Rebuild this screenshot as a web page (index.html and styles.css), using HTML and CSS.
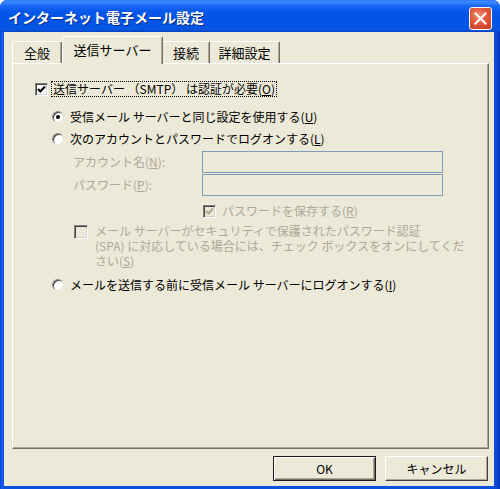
FILE: index.html
```html
<!DOCTYPE html>
<html lang="ja">
<head>
<meta charset="utf-8">
<link rel="stylesheet" href="styles.css">
</head>
<body>
<div class="window">
  <div class="titlebar">
    <span class="title">インターネット電子メール設定</span>
    <span class="close">
      <svg width="21" height="21" viewBox="0 0 21 21"><path d="M5.5 5.5 L15.5 15.5 M15.5 5.5 L5.5 15.5" stroke="#fff" stroke-width="2.2" stroke-linecap="square"/></svg>
    </span>
  </div>
  <div class="client">
    <div class="tabs">
      <div class="tab first">全般</div>
      <div class="tab active">送信サーバー</div>
      <div class="tab">接続</div>
      <div class="tab">詳細設定</div>
    </div>
    <div class="panel">
      <div class="row r1">
        <span class="check"><svg width="11" height="11" viewBox="0 0 11 11"><path d="M2 5 L4.3 7.5 L9 2.5" fill="none" stroke="#000" stroke-width="2.2"/></svg></span>
        <span class="label focus">送信サーバー （SMTP） は認証が必要(<u>O</u>)</span>
      </div>
      <div class="row r2 ind1">
        <span class="radio on"></span>
        <span class="label">受信メール サーバーと同じ設定を使用する(<u>U</u>)</span>
      </div>
      <div class="row r3 ind1">
        <span class="radio"></span>
        <span class="label">次のアカウントとパスワードでログオンする(<u>L</u>)</span>
      </div>
      <div class="field f1">
        <span class="flabel dis">アカウント名(<u>N</u>):</span>
        <span class="input"></span>
      </div>
      <div class="field f2">
        <span class="flabel dis">パスワード(<u>P</u>):</span>
        <span class="input"></span>
      </div>
      <div class="row r4 ind3">
        <span class="check disabled"><svg width="11" height="11" viewBox="0 0 11 11"><path d="M2 5 L4.3 7.5 L9 2.5" fill="none" stroke="#ACA899" stroke-width="2.2"/></svg></span>
        <span class="label dis">パスワードを保存する(<u>R</u>)</span>
      </div>
      <div class="spa ind2">
        <span class="check disabled big"></span>
        <span class="spatext dis">メール サーバーがセキュリティで保護されたパスワード認証<br>(SPA) に対応している場合には、チェック ボックスをオンにしてくだ<br>さい(<u>S</u>)</span>
      </div>
      <div class="row r5 ind1">
        <span class="radio"></span>
        <span class="label">メールを送信する前に受信メール サーバーにログオンする(<u>I</u>)</span>
      </div>
    </div>
    <div class="buttons">
      <span class="btn default">OK</span>
      <span class="btn">キャンセル</span>
    </div>
  </div>
</div>
</body>
</html>
```

FILE: styles.css
```css
html, body {
  margin: 0;
  padding: 0;
  background: #ffffff;
}
body {
  width: 500px;
  height: 489px;
  overflow: hidden;
  font-family: "Noto Sans CJK JP", "Noto Sans", sans-serif;
  font-size: 12px;
  color: #000;
}
.window {
  width: 500px;
  height: 489px;
  display: flex;
  flex-direction: column;
  background: linear-gradient(to right, #0840d8 0, #1660f0 2px, #0a4fe0 4px, #0a4fe0 494px, #0b47d6 497px, #0535b8 500px);
  border-radius: 7px 7px 0 0;
  box-sizing: border-box;
}
.titlebar {
  height: 32px;
  flex: none;
  display: flex;
  align-items: center;
  justify-content: space-between;
  padding: 0 8px 0 8px;
  border-radius: 7px 7px 0 0;
  background: linear-gradient(to bottom, #2a78f8 0px, #3d8bff 2px, #1866f4 6px, #0658ea 12px, #0054e3 20px, #0357e6 27px, #0a55dc 30px, #0040c0 32px);
}
.title {
  color: #fff;
  font-weight: bold;
  font-size: 14px;
  line-height: 16px;
  text-shadow: 1px 1px 0 #0a2a8a;
  margin-top: 1px;
}
.close {
  width: 21px;
  height: 21px;
  margin-right: 0;
  margin-top: 5px;
  border: 1px solid #fff;
  border-radius: 3px;
  background: radial-gradient(circle at 40% 35%, #f08a6a 0%, #e0583a 45%, #c4381a 100%);
  display: flex;
  align-items: center;
  justify-content: center;
}
.client {
  flex: 1;
  margin: 0 6px 3px 4px;
  background: #ece9d8;
  display: flex;
  flex-direction: column;
}
.tabs {
  display: flex;
  align-items: flex-end;
  height: 31px;
  padding-left: 8px;
  flex: none;
}
.tab {
  height: 22px;
  line-height: 22px;
  box-sizing: border-box;
  border-top: 1px solid #fff;
  border-left: 1px solid #fff;
  border-right: 1px solid #716f64;
  box-shadow: inset -1px 0 0 #aca899;
  font-size: 13px;
  border-radius: 2px 2px 0 0;
  background: #ece9d8;
  text-align: center;
  padding: 0;
}
.tab.first {
  width: 50px;
}
.tab.active {
  height: 28px;
  line-height: 26px;
  width: 101px;
  margin-bottom: -1px;
  position: relative;
  z-index: 2;
}
.tab:nth-child(3) {
  width: 47px;
  border-left: none;
}
.tab:nth-child(4) {
  width: 70px;
  border-left: none;
}
.panel {
  margin-left: 8px;
  width: 477px;
  height: 386px;
  box-sizing: border-box;
  border-top: 1px solid #fff;
  border-left: 1px solid #fff;
  border-right: 1px solid #716f64;
  border-bottom: 1px solid #716f64;
  box-shadow: inset -1px -1px 0 #aca899;
  background: #ece9d8;
  padding-top: 18px;
  padding-left: 22px;
  flex: none;
}
.row {
  display: flex;
  align-items: center;
  height: 14px;
}
.label {
  line-height: 14px;
  white-space: nowrap;
}
.focus {
  outline: 1px dotted #000;
  outline-offset: 0px;
  padding: 0 1px;
  margin-left: 4px;
}
.r2 { margin-top: 14px; }
.r3 { margin-top: 8px; }
.ind1 { margin-left: 17px; }
.ind1 .label { margin-left: 6px; }
.check {
  width: 13px;
  height: 13px;
  box-sizing: border-box;
  flex: none;
  border-top: 1px solid #808080;
  border-left: 1px solid #808080;
  border-right: 1px solid #fff;
  border-bottom: 1px solid #fff;
  box-shadow: inset 1px 1px 0 #404040, inset -1px -1px 0 #d4d0c8;
  background: #fff;
  display: flex;
  align-items: center;
  justify-content: center;
}
.check.disabled {
  background: #ece9d8;
}
.radio {
  width: 12px;
  height: 12px;
  box-sizing: border-box;
  border-radius: 50%;
  flex: none;
  background: #fff;
  border: 1px solid #8a8a8a;
  border-bottom-color: #e4e2d8;
  border-right-color: #e4e2d8;
  box-shadow: inset 1px 1px 0 #404040;
  position: relative;
}
.radio.on::after {
  content: "";
  position: absolute;
  left: 3px;
  top: 3px;
  width: 4px;
  height: 4px;
  border-radius: 50%;
  background: #000;
}
.dis { color: #aca899; }
.field {
  display: flex;
  align-items: center;
  height: 22px;
  margin-left: 38px;
}
.f1 { margin-top: 5px; }
.f2 { margin-top: 1px; }
.flabel {
  width: 129px;
  line-height: 14px;
  white-space: nowrap;
}
.input {
  width: 241px;
  height: 22px;
  box-sizing: border-box;
  border: 1px solid #7f9db9;
  box-shadow: inset 0 0 0 1px #ece9d8;
  background: #ece9d8;
}
.r4 { margin-top: 8px; }
.ind3 { margin-left: 168px; }
.ind3 .label { margin-left: 6px; }
.spa {
  display: flex;
  align-items: flex-start;
  margin-top: 5px;
}
.ind2 { margin-left: 39px; }
.check.big {
  width: 14px;
  height: 14px;
  margin-top: 2px;
}
.spatext {
  margin-left: 7px;
  line-height: 15px;
  white-space: nowrap;
}
.r5 { margin-top: 10px; }
.buttons {
  display: flex;
  justify-content: flex-end;
  gap: 9px;
  padding-right: 6px;
  margin-top: 7px;
}
.btn {
  width: 103px;
  height: 25px;
  box-sizing: border-box;
  display: flex;
  align-items: center;
  justify-content: center;
  font-size: 12px;
  background: #ece9d8;
  border-top: 1px solid #fff;
  border-left: 1px solid #fff;
  border-right: 1px solid #404040;
  border-bottom: 1px solid #404040;
  box-shadow: inset -1px -1px 0 #aca899;
}
.btn.default {
  border: 1px solid #1a1a1a;
  box-shadow: inset 1px 1px 0 #fff, inset -1px -1px 0 #716f64, inset -2px -2px 0 #aca899;
}
```
